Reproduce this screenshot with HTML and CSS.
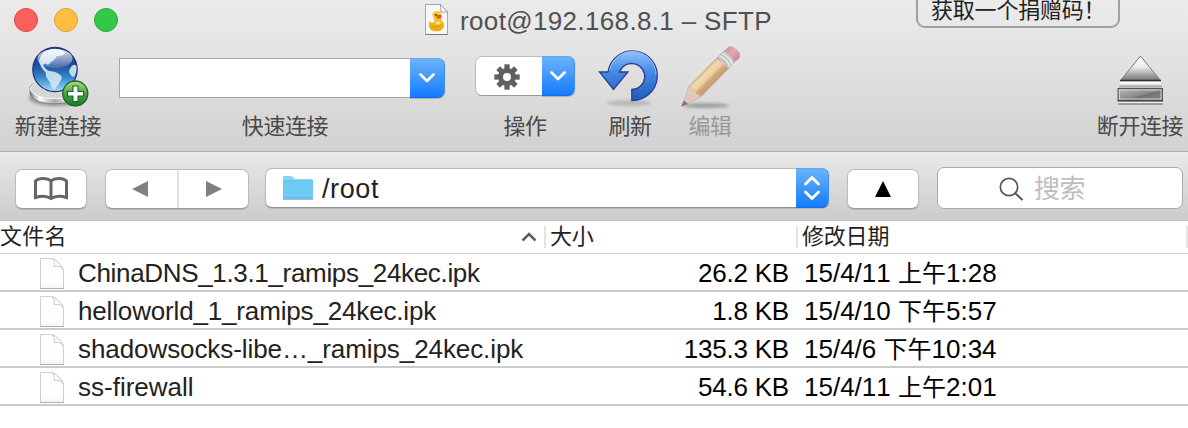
FILE: index.html
```html
<!DOCTYPE html>
<html lang="zh-CN">
<head>
<meta charset="utf-8">
<title>root@192.168.8.1 – SFTP</title>
<link rel="stylesheet" href="styles.css">
</head>
<body>
<svg class="defs" width="0" height="0" aria-hidden="true">
  <defs>
    <linearGradient id="page" x1="0" y1="0" x2="0" y2="1"><stop offset="0" stop-color="#fff"/><stop offset=".8" stop-color="#fefefe"/><stop offset="1" stop-color="#f3f3f3"/></linearGradient>
    <symbol id="file" viewBox="0 0 26 33">
      <path d="M1.500 1.500H12Q16 2 19.500 6Q24.500 10 24.500 14V31.500H1.500Z" fill="url(#page)" stroke="#d0d0d0"/>
      <path d="M13 1.500Q16 3 15.200 9.500Q22 8.500 24.500 13Q22 8 19 5.500Q16 2 13 1.500Z" fill="#fff" stroke="#cacaca"/>
      <path d="M1 31.500H25" stroke="#b2b2b2"/>
    </symbol>
  </defs>
</svg>
<main class="window">
  <header class="top">
    <div class="titlebar">
      <div class="lights"><i class="red"></i><i class="yellow"></i><i class="green"></i></div>
      <div class="title">
        <svg width="24" height="32" viewBox="0 0 24 32">
          <defs><linearGradient id="duck" x1="0" y1="0" x2="0" y2="1"><stop offset="0" stop-color="#ffd43b"/><stop offset="1" stop-color="#e9a900"/></linearGradient></defs>
          <path d="M.5.5H15.500L22.500 8V30.500H.5Z" fill="#f7f7f7" stroke="#a9a9a9"/>
          <path d="M.5 30.500H22.500" stroke="#777"/>
          <path d="M15.500 .5L16 8H22.500Z" fill="#fff" stroke="#8b8b8b" stroke-width=".8"/>
          <path d="M4.500 17.500Q7.500 21 10 17.500L9 14Q5.500 8.500 11 7.200Q16.500 7 16.500 12Q16 15 15.800 16.200Q20 19 18.200 24Q16 27.500 10.500 27Q4 26.500 4 21Z" fill="url(#duck)" stroke="#d89d0d" stroke-width=".4"/>
          <path d="M10.500 11.500Q14 9.800 16.600 11.800Q16.500 15.200 12.500 14.800Z" fill="#e9571b"/>
          <circle cx="10.800" cy="10.800" r="1" fill="#5c3b00"/>
          <path d="M6 21Q10 25 16 21" fill="none" stroke="#d89300"/>
          <ellipse cx="13" cy="19" rx="2.500" ry="1.500" fill="#ffe77a"/>
        </svg>
        <span>root@192.168.8.1 – SFTP</span>
      </div>
      <div class="donate">获取一个捐赠码！</div>
    </div>
    <div class="tools">
      <div class="tool connect">
        <div class="face">
          <svg width="64" height="66" viewBox="26 44 64 66">
            <defs>
              <linearGradient id="sea" x1="0" y1="0" x2="0" y2="1"><stop offset="0" stop-color="#273a82"/><stop offset=".4" stop-color="#1c4f9c"/><stop offset=".7" stop-color="#3a8bcd"/><stop offset="1" stop-color="#a5e2fb"/></linearGradient>
              <linearGradient id="gloss" x1="0" y1="0" x2="0" y2="1"><stop offset="0" stop-color="#fff" stop-opacity=".85"/><stop offset="1" stop-color="#fff" stop-opacity=".15"/></linearGradient>
              <linearGradient id="plus" x1="0" y1="0" x2="0" y2="1"><stop offset="0" stop-color="#b4d98b"/><stop offset=".5" stop-color="#4ba536"/><stop offset="1" stop-color="#127a2b"/></linearGradient>
              <linearGradient id="base" x1="0" y1="0" x2="1" y2="0"><stop offset="0" stop-color="#777"/><stop offset=".2" stop-color="#fff"/><stop offset=".5" stop-color="#aaa"/><stop offset=".8" stop-color="#eee"/><stop offset="1" stop-color="#777"/></linearGradient>
              <filter id="soft" x="-30%" y="-80%" width="160%" height="260%"><feGaussianBlur stdDeviation="1.800"/></filter>
            </defs>
            <ellipse cx="56" cy="98" rx="27" ry="8" fill="#555" opacity=".5" filter="url(#soft)"/>
            <path d="M30 88C30 78 79 78 79 88V94C75 107 34 107 30 94Z" fill="url(#base)" stroke="#777" stroke-width=".8"/>
            <ellipse cx="54.500" cy="89" rx="24" ry="9.500" fill="#d6d6d6" stroke="#fafafa"/>
            <circle cx="55" cy="69.500" r="22.200" fill="url(#sea)" stroke="#242c80" stroke-width="1.200"/>
            <path d="M39 61Q41 52 51 49Q60 48 66 53Q62 57 57 56Q54 61 51 62L48 65Q45 62 43 65Q47 71 50 71L55 72Q62 75 62 78Q60 82 58 85Q55 89 54 90Q50 86 50 82Q45 77 46 73Q40 67 39 61ZM71 67Q74 63 76.500 66Q77 72 74 77Q70 76 69 71Z" fill="#d1e7f5" opacity=".9"/>
            <ellipse cx="55" cy="58.500" rx="17.500" ry="9.500" fill="url(#gloss)"/>
            <circle cx="75.300" cy="93.500" r="12.500" fill="url(#plus)" stroke="#1c652d" stroke-width="1.300"/>
            <path d="M73 86H78V91.500H83.500V96H78V101.500H73V96H67.500V91.500H73Z" fill="#fff" stroke="#17662b" stroke-width="1.100"/>
          </svg>
        </div>
        <span>新建连接</span>
      </div>
      <div class="tool quick">
        <div class="face"><div class="combo"><i></i><b><svg width="16" height="10" viewBox="0 0 16 10"><path d="M1.500 1.500L8 8L14.500 1.500"/></svg></b></div></div>
        <span>快速连接</span>
      </div>
      <div class="tool action">
        <div class="face"><div class="combo gearbox"><i>
          <svg width="26" height="26" viewBox="-13 -13 26 26"><g fill="#606060"><circle r="9"/><rect x="-2.600" y="-12.700" width="5.200" height="25.400"/><rect x="-12.700" y="-2.600" width="25.400" height="5.200"/><g transform="rotate(45)"><rect x="-2.600" y="-12.500" width="5.200" height="25"/><rect x="-12.500" y="-2.600" width="25" height="5.200"/></g></g><circle r="4" fill="#fff"/></svg>
        </i><b><svg width="16" height="10" viewBox="0 0 16 10"><path d="M1.500 1.500L8 8L14.500 1.500"/></svg></b></div></div>
        <span>操作</span>
      </div>
      <div class="tool refresh">
        <div class="face">
          <svg width="64" height="66" viewBox="597 44 64 66">
            <defs><linearGradient id="arrow" x1="0" y1="0" x2="0" y2="1"><stop offset="0" stop-color="#96c2fa"/><stop offset=".4" stop-color="#468ce9"/><stop offset="1" stop-color="#205bb4"/></linearGradient></defs>
            <ellipse cx="629" cy="103" rx="22" ry="3" fill="#777" opacity=".35" filter="url(#soft)"/>
            <path d="M599.500 72H608A24.800 24.800 0 1 1 631.800 100.500V89.500A13 13 0 1 0 619.500 72H628L613.500 89.500Z" fill="url(#arrow)" stroke="#283f94" stroke-width="1.300"/>
            <path d="M609.500 70A23.500 23.500 0 0 1 656 75" fill="none" stroke="#bad7ff" stroke-width="1" opacity=".65"/>
          </svg>
        </div>
        <span>刷新</span>
      </div>
      <div class="tool edit">
        <div class="face">
          <svg width="64" height="66" viewBox="678 44 64 66">
            <defs>
              <linearGradient id="wood" gradientUnits="userSpaceOnUse" x1="698" y1="74" x2="709" y2="85"><stop offset="0" stop-color="#c69c7b"/><stop offset=".3" stop-color="#f3d8ac"/><stop offset=".65" stop-color="#e9d0a6"/><stop offset=".75" stop-color="#dcae74"/><stop offset="1" stop-color="#c7a17f"/></linearGradient>
              <linearGradient id="rubber" x1="0" y1="0" x2="1" y2="1"><stop offset="0" stop-color="#c98a98"/><stop offset=".45" stop-color="#e3acb7"/><stop offset="1" stop-color="#bf7b88"/></linearGradient>
            </defs>
            <ellipse cx="706" cy="105.500" rx="23" ry="2.500" fill="#555" opacity=".45" filter="url(#soft)"/>
            <path d="M688.500 87L717 58L728 69L700 97.500Z" fill="url(#wood)" stroke="#c19c7e" stroke-width=".8"/>
            <path d="M688.500 87Q692 86 693 90Q697 90 696.500 94Q700 93.500 700 97.500L682 106.500Z" fill="#e2c8bb" stroke="#c6aaa0" stroke-width=".6"/>
            <path d="M684 100.500L688 104L681 106.500Z" fill="#777"/>
            <path d="M724 51L729 46.500Q732 45.500 735 48L739 52Q741 56 739 58.500L734 62.500Z" fill="url(#rubber)"/>
            <path d="M717 58L724 51Q731 53 734.500 62L728 69Q725 61 717 58Z" fill="#c9c9c9" stroke="#999" stroke-width=".6"/>
            <path d="M719.500 56Q727 59 730 67M722 53.500Q730 57 732.500 64.500" fill="none" stroke="#eee" stroke-width="1.300"/>
          </svg>
        </div>
        <span>编辑</span>
      </div>
      <div class="tool eject">
        <div class="face">
          <svg width="56" height="60" viewBox="1112 50 56 60">
            <defs><linearGradient id="metal" x1="0" y1="0" x2="0" y2="1"><stop offset="0" stop-color="#fff"/><stop offset=".45" stop-color="#eaeaea"/><stop offset="1" stop-color="#737378"/></linearGradient><linearGradient id="bar" x1="0" y1="0" x2="1" y2="1"><stop offset="0" stop-color="#bcbcc0"/><stop offset=".55" stop-color="#85858a"/><stop offset=".56" stop-color="#717176"/><stop offset="1" stop-color="#88888c"/></linearGradient></defs>
            <rect x="1118" y="102" width="45" height="3" fill="#777" opacity=".6"/>
            <path d="M1120 83H1161" stroke="#fafafa" stroke-width="2"/>
            <path d="M1119 86.500H1162" stroke="#aaa" stroke-width="2"/>
            <path d="M1140.500 56L1160.500 80.500H1120.500Z" fill="url(#metal)" stroke="#777" stroke-width="1"/>
            <path d="M1120 80.500H1161" stroke="#303030" stroke-width="1.300"/>
            <rect x="1118" y="88.500" width="44.500" height="12" fill="url(#bar)" stroke="#555"/>
            <rect x="1119.500" y="90" width="41.500" height="9" fill="none" stroke="#cfcfd1"/>
            <path d="M1117.500 101H1163" stroke="#343434"/><path d="M1117.500 102.500H1163" stroke="#eee"/>
          </svg>
        </div>
        <span>断开连接</span>
      </div>
    </div>
  </header>
  <nav class="pathbar">
    <div class="btn book"><svg width="36" height="26" viewBox="0 0 36 26"><path d="M18 5Q15.500 2.500 9.500 2.500Q5 2.500 2.500 5V21.500Q12 18.500 18 22.500Q24 18.500 33.500 21.500V5Q31 2.500 26.500 2.500Q20.500 2.500 18 5V23" fill="none" stroke="#666" stroke-width="3"/></svg></div>
    <div class="btn history"><i><svg width="16" height="16" viewBox="0 0 16 16"><path d="M16 0V16L0 8Z" fill="#808080"/></svg></i><i><svg width="16" height="16" viewBox="0 0 16 16"><path d="M0 0V16L16 8Z" fill="#808080"/></svg></i></div>
    <div class="location">
      <svg width="32" height="26" viewBox="0 0 32 26"><path d="M1 2Q1 1 2 1H9.500L13 4H30Q31 4 31 5V24H1Z" fill="#89d3f6"/><path d="M1 6H31V24H1Z" fill="#6ecbf6"/><path d="M1 6H31M1 22.500H31" stroke="#5cb8e3" stroke-width=".8"/><path d="M1 24.500H31" stroke="#a4bbc6"/></svg>
      <span>/root</span>
      <b><svg width="18" height="26" viewBox="0 0 18 26"><path d="M2.500 9L9 2.500L15.500 9M2.500 17L9 23.500L15.500 17"/></svg></b>
    </div>
    <div class="btn up"><svg width="16" height="16" viewBox="0 0 16 16"><path d="M8 0L16 16H0Z"/></svg></div>
    <div class="search"><svg width="25" height="25" viewBox="0 0 25 25"><circle cx="10" cy="10" r="8.700" fill="none" stroke="#555" stroke-width="1.700"/><path d="M16 16L23.500 23" stroke="#555" stroke-width="2"/></svg><span>搜索</span></div>
  </nav>
  <section class="files">
    <div class="row head">
      <div class="name"><span>文件名</span><svg width="16" height="10" viewBox="0 0 16 10"><path d="M1.500 8.500L8 2L14.500 8.500" fill="none" stroke="#606060" stroke-width="2.600"/></svg></div>
      <div class="size">大小</div><div class="date">修改日期</div>
    </div>
    <div class="row"><div class="name n1"><svg width="26" height="33"><use href="#file"/></svg><span>ChinaDNS_1.3.1_ramips_24kec.ipk</span></div><div class="size">26.2 KB</div><div class="date">15/4/11 <span>上午</span>1:28</div></div>
    <div class="row"><div class="name n2"><svg width="26" height="33"><use href="#file"/></svg><span>helloworld_1_ramips_24kec.ipk</span></div><div class="size">1.8 KB</div><div class="date">15/4/10 <span>下午</span>5:57</div></div>
    <div class="row"><div class="name n3"><svg width="26" height="33"><use href="#file"/></svg><span>shadowsocks-libe…_ramips_24kec.ipk</span></div><div class="size">135.3 KB</div><div class="date">15/4/6 <span>下午</span>10:34</div></div>
    <div class="row"><div class="name n4"><svg width="26" height="33"><use href="#file"/></svg><span>ss-firewall</span></div><div class="size">54.6 KB</div><div class="date">15/4/11 <span>上午</span>2:01</div></div>
  </section>
</main>
</body>
</html>
```
FILE: styles.css
```css
* { box-sizing: border-box; }
body { margin: 0; background: #fff; font-family: "Liberation Sans", "Noto Sans CJK SC", sans-serif; font-kerning: none; color: #222; }
.defs { position: absolute; }
svg { display: block; flex: none; }
i, b { font-style: normal; font-weight: 400; }
.window { width: 1188px; height: 428px; overflow: hidden; }

.top { height: 152px; background: linear-gradient(#ebebeb, #e1e1e1 45%, #d1d1d1); border-bottom: 1px solid #aeaeae; }
.titlebar { height: 40px; display: flex; align-items: flex-start; }
.lights { display: flex; gap: 16px; padding: 8px 0 0 14px; width: 425px; }
.lights i { width: 24px; height: 24px; border-radius: 50%; border-width: 1px; border-style: solid; }
.red { background: #fc605b; border-color: #df4644; }
.yellow { background: #fdbe41; border-color: #dea034; }
.green { background: #34c84a; border-color: #27a935; }
.title { display: flex; align-items: flex-start; gap: 11px; padding-top: 4px; width: 491px; font-size: 26px; line-height: 34px; letter-spacing: .35px; color: #505050; white-space: nowrap; }
.donate { width: 204px; height: 28px; border: 2px solid #a0a0a0; border-top: 0; border-radius: 0 0 9px 9px; padding-left: 13px; font-size: 22px; line-height: 22px; letter-spacing: -.2px; white-space: nowrap; color: #222; }

.tools { display: flex; padding: 0 4px 0 14px; }
.tool { display: flex; flex-direction: column; align-items: center; color: #4a4a4a; }
.tool > span { font-size: 22px; line-height: 34px; letter-spacing: -.4px; white-space: nowrap; }
.face { height: 70px; width: 100%; display: flex; justify-content: center; align-items: flex-start; padding-top: 4px; }
.connect { width: 88px; }
.quick { width: 326px; margin-left: 17px; }
.quick .face { padding-top: 18px; }
.quick > span { padding-left: 6px; }
.action { width: 100px; margin-left: 30px; }
.action .face { padding-top: 16px; }
.refresh { width: 64px; margin-left: 22px; }
.refresh > span { padding-left: 2px; }
.edit { width: 64px; margin-left: 17px; }
.edit > span { color: #999; }
.eject { width: 88px; margin-left: auto; }
.eject .face { padding-top: 10px; }
.combo { display: flex; width: 100%; height: 40px; }
.combo i { flex: 1; background: #fff; border: 1px solid #a8a8a8; border-right: 0; display: flex; align-items: center; justify-content: center; }
.combo.gearbox i { border-radius: 7px 0 0 7px; border-color: #bcbcbc #bcbcbc #999; padding: 1px 4px 0 0; }
.combo b, .location b { background: linear-gradient(#6cb3fa, #147bfe); border: 1px solid #4c9cf5; border-color: #61a7ef #3e8ff3 #1969e4; border-left: 0; border-radius: 0 7px 7px 0; display: flex; align-items: center; justify-content: center; }
.combo b { width: 35px; box-shadow: 0 1px 1px rgba(0,0,0,.2); }
.combo.gearbox b { width: 33px; }
b path { fill: none; stroke: #fff; stroke-width: 2.8; stroke-linecap: round; stroke-linejoin: round; }

.pathbar { height: 69px; background: linear-gradient(#eaeaea, #cbcbcb); border-bottom: 1px solid #c6c6c6; display: flex; align-items: flex-start; padding: 17px 5px 0 15px; }
.btn { height: 40px; background: #fff; border: 1px solid #bdbdbd; border-bottom-color: #999; border-radius: 7px; display: flex; align-items: center; justify-content: center; box-shadow: 0 1px 1px rgba(0,0,0,.12); }
.book { width: 72px; }
.history { width: 144px; margin-left: 18px; }
.history i { flex: 1; height: 38px; display: flex; align-items: center; justify-content: center; padding-right: 2px; }
.history i + i { border-left: 2px solid #e2e2e2; padding: 0 0 0 1px; }
.location { width: 564px; height: 40px; margin: -1px 0 0 16px; background: #fff; border: 1px solid #b9b9b9; border-bottom-color: #929292; border-right: 0; border-radius: 7px; display: flex; align-items: center; padding-left: 16px; font-size: 27px; box-shadow: 0 1px 1px rgba(0,0,0,.15); }
.location span { padding: 2px 0 0 8px; letter-spacing: .6px; }
.location b { width: 33px; height: 40px; margin-left: auto; }
.up { width: 72px; margin-left: 18px; }
.search { width: 246px; height: 42px; margin: -2px 0 0 18px; border: 1px solid #aaa; border-radius: 7px; background: #fff; display: flex; align-items: center; padding-left: 61px; font-size: 26px; line-height: 36px; color: #bebebe; }
.search svg { margin-top: 2px; }
.search span { padding: 2px 0 0 10px; letter-spacing: -.6px; }

.row { height: 38px; border-bottom: 2px solid #cbcbcb; display: grid; grid-template-columns: 544px 252px 392px; align-items: start; font-size: 26px; line-height: 36px; white-space: nowrap; }
.name { display: flex; align-items: flex-start; height: 36px; padding-left: 39px; }
.name svg { margin-top: 3px; }
.name span { padding: 1px 0 0 13px; }
.n1 { letter-spacing: -.33px; }
.n2 { letter-spacing: -.16px; }
.n3 { letter-spacing: -.08px; }
.n4 { letter-spacing: 0; }
.size { text-align: right; padding: 1px 7px 0 0; letter-spacing: -.2px; color: #000; }
.date { padding: 1px 0 0 8px; letter-spacing: 0; color: #000; }
.date span { font-size: 24px; line-height: 24px; letter-spacing: 0; }
.head { height: 33px; border-bottom: 1px solid #cfcfcf; font-size: 22px; line-height: 22px; align-items: center; }
.head .name { height: auto; padding: 0 7px 0 0; align-items: center; justify-content: space-between; }
.head .name span { padding: 0; letter-spacing: .3px; }
.head .name svg { margin: 0; }
.head .size, .head .date { color: #222; text-align: left; border-left: 2px solid #e3e3e3; padding: 0 0 0 4px; letter-spacing: -.2px; }
.head .date { border-right: 2px solid #e3e3e3; }
```
